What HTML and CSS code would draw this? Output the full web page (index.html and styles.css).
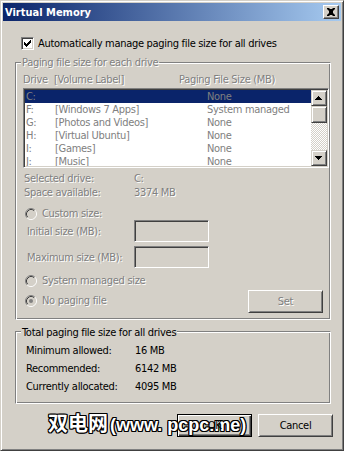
FILE: index.html
```html
<!DOCTYPE html>
<html lang="en">

<head>
    <meta charset="UTF-8">
    <title>Virtual Memory</title>
    <link rel="stylesheet" href="styles.css">
</head>

<body>
    <div class="window">
        <div class="titlebar">
            <span class="title">Virtual Memory</span>
            <span class="close-btn">
                <svg width="14" height="12" viewBox="0 0 14 12">
                    <path d="M3 2h2l1 1h2l1-1h2v1l-2 2v2l2 2v1H9L8 9H6L5 10H3V9l2-2V5L3 3z" fill="#000"/>
                    <path d="M5 5h4v2H5z" fill="#000"/>
                </svg>
            </span>
        </div>

        <div class="auto-row">
            <span class="checkbox">
                <svg width="11" height="11" viewBox="0 0 11 11">
                    <path d="M2 4h1v3H2z M3 5h1v3H3z M4 6h1v3H4z M5 5h1v3H5z M6 4h1v3H6z M7 3h1v3H7z M8 2h1v3H8z" fill="#000"/>
                </svg>
            </span>
            <span>Automatically manage paging file size for all drives</span>
        </div>

        <div class="group group-drives">
            <div class="group-title disabled">Paging file size for each drive</div>
            <div class="list-head disabled">
                <span class="head-drive">Drive</span>
                <span class="head-label">[Volume Label]</span>
                <span>Paging File Size (MB)</span>
            </div>
            <div class="listbox">
                <div class="rows">
                    <div class="row selected"><span class="col-drive">C:</span><span class="col-label"></span><span>None</span></div>
                    <div class="row"><span class="col-drive">F:</span><span class="col-label">[Windows 7 Apps]</span><span>System managed</span></div>
                    <div class="row"><span class="col-drive">G:</span><span class="col-label">[Photos and Videos]</span><span>None</span></div>
                    <div class="row"><span class="col-drive">H:</span><span class="col-label">[Virtual Ubuntu]</span><span>None</span></div>
                    <div class="row"><span class="col-drive">I:</span><span class="col-label">[Games]</span><span>None</span></div>
                    <div class="row"><span class="col-drive">J:</span><span class="col-label">[Music]</span><span>None</span></div>
                </div>
                <div class="scrollbar">
                    <div class="sb-btn">
                        <svg width="14" height="14" viewBox="0 0 14 14">
                            <path d="M6 5h1v1H6z M5 6h3v1H5z M4 7h5v1H4z M3 8h7v1H3z" fill="#000"/>
                        </svg>
                    </div>
                    <div class="sb-thumb"></div>
                    <div class="sb-track"></div>
                    <div class="sb-btn">
                        <svg width="14" height="14" viewBox="0 0 14 14">
                            <path d="M3 5h7v1H3z M4 6h5v1H4z M5 7h3v1H5z M6 8h1v1H6z" fill="#000"/>
                        </svg>
                    </div>
                </div>
            </div>

            <div class="info-row info-first disabled">
                <span class="info-label">Selected drive:</span>
                <span>C:</span>
            </div>
            <div class="info-row disabled">
                <span class="info-label">Space available:</span>
                <span>3374 MB</span>
            </div>

            <div class="radio-row radio-custom disabled">
                <svg class="radio" width="12" height="12" viewBox="0 0 12 12">
                    <circle cx="6" cy="6" r="5.5" fill="#d4d0c8"/>
                    <path d="M2.11 9.89A5.5 5.5 0 0 1 9.89 2.11" stroke="#808080" fill="none"/>
                    <path d="M9.89 2.11A5.5 5.5 0 0 1 2.11 9.89" stroke="#fff" fill="none"/>
                    <path d="M2.82 9.18A4.5 4.5 0 0 1 9.18 2.82" stroke="#404040" fill="none"/>
                    <path d="M9.18 2.82A4.5 4.5 0 0 1 2.82 9.18" stroke="#d4d0c8" fill="none"/>
                </svg>
                <span>Custom size:</span>
            </div>
            <div class="field-row">
                <span class="field-label disabled">Initial size (MB):</span>
                <input class="field" type="text" disabled>
            </div>
            <div class="field-row field-max">
                <span class="field-label disabled">Maximum size (MB):</span>
                <input class="field" type="text" disabled>
            </div>

            <div class="radio-row radio-system disabled">
                <svg class="radio" width="12" height="12" viewBox="0 0 12 12">
                    <circle cx="6" cy="6" r="5.5" fill="#d4d0c8"/>
                    <path d="M2.11 9.89A5.5 5.5 0 0 1 9.89 2.11" stroke="#808080" fill="none"/>
                    <path d="M9.89 2.11A5.5 5.5 0 0 1 2.11 9.89" stroke="#fff" fill="none"/>
                    <path d="M2.82 9.18A4.5 4.5 0 0 1 9.18 2.82" stroke="#404040" fill="none"/>
                    <path d="M9.18 2.82A4.5 4.5 0 0 1 2.82 9.18" stroke="#d4d0c8" fill="none"/>
                </svg>
                <span>System managed size</span>
            </div>
            <div class="last-row">
                <div class="radio-row disabled">
                    <svg class="radio" width="12" height="12" viewBox="0 0 12 12">
                        <circle cx="6" cy="6" r="5.5" fill="#d4d0c8"/>
                        <path d="M2.11 9.89A5.5 5.5 0 0 1 9.89 2.11" stroke="#808080" fill="none"/>
                        <path d="M9.89 2.11A5.5 5.5 0 0 1 2.11 9.89" stroke="#fff" fill="none"/>
                        <path d="M2.82 9.18A4.5 4.5 0 0 1 9.18 2.82" stroke="#404040" fill="none"/>
                        <path d="M9.18 2.82A4.5 4.5 0 0 1 2.82 9.18" stroke="#d4d0c8" fill="none"/>
                        <circle cx="6" cy="6" r="2" fill="#808080"/>
                    </svg>
                    <span>No paging file</span>
                </div>
                <button class="btn btn-set disabled">Set</button>
            </div>
        </div>

        <div class="group group-total">
            <div class="group-title">Total paging file size for all drives</div>
            <div class="total-row">
                <span class="total-label">Minimum allowed:</span>
                <span>16 MB</span>
            </div>
            <div class="total-row">
                <span class="total-label">Recommended:</span>
                <span>6142 MB</span>
            </div>
            <div class="total-row">
                <span class="total-label">Currently allocated:</span>
                <span>4095 MB</span>
            </div>
        </div>

        <div class="buttons">
            <button class="btn btn-default"><span class="btn-text">OK</span></button>
            <button class="btn">Cancel</button>
        </div>

        <div class="watermark"><span class="wm-cjk">双电网</span><span class="wm-latin">(www. pcpc.me)</span></div>
    </div>
</body>

</html>
```

FILE: styles.css
```css
body {
    margin: 0;
    font-family: "DejaVu Sans Condensed", "DejaVu Sans", sans-serif;
    font-stretch: condensed;
    font-size: 11px;
    line-height: 13px;
    letter-spacing: -0.3px;
    color: #000;
}

.window {
    position: relative;
    width: 344px;
    height: 451px;
    box-sizing: border-box;
    padding: 2px;
    background: #d4d0c8;
    border: 1px solid;
    border-color: #d4d0c8 #404040 #404040 #d4d0c8;
    box-shadow: inset 1px 1px #fff, inset -1px -1px #808080;
}

.titlebar {
    height: 18px;
    display: flex;
    align-items: center;
    justify-content: space-between;
    padding: 0 2px;
    background: linear-gradient(to right, #0a246a, #a6caf0);
}

.title {
    color: #fff;
    font-weight: bold;
    letter-spacing: 0;
}

.close-btn {
    width: 16px;
    height: 14px;
    box-sizing: border-box;
    display: flex;
    align-items: center;
    justify-content: center;
    background: #d4d0c8;
    border: 1px solid;
    border-color: #fff #404040 #404040 #fff;
    box-shadow: inset -1px -1px #808080;
}

.close-btn svg {
    display: block;
}

.disabled {
    color: #808080;
    text-shadow: 1px 1px 0 #fff;
}

/* checkbox row */
.auto-row {
    display: flex;
    align-items: center;
    gap: 4px;
    height: 13px;
    margin: 16px 0 0 18px;
}

.checkbox {
    width: 13px;
    height: 13px;
    box-sizing: border-box;
    background: #fff;
    border: 1px solid;
    border-color: #808080 #fff #fff #808080;
    box-shadow: inset 1px 1px #404040, inset -1px -1px #d4d0c8;
}

.checkbox svg {
    display: block;
}

/* group boxes */
.group {
    width: 316px;
    box-sizing: border-box;
    margin-left: 12px;
    border: 1px solid;
    border-color: #808080 #fff #fff #808080;
    box-shadow: inset 1px 1px #fff, inset -1px -1px #808080;
}

.group-title {
    width: fit-content;
    padding: 0 1px;
    background: #d4d0c8;
}

.group-drives {
    height: 258px;
    margin-top: 12px;
    padding-left: 7px;
}

.group-drives .group-title {
    margin: -7px 0 0 -2px;
}

.list-head {
    display: flex;
    height: 13px;
    margin-top: 4px;
}

.head-drive {
    width: 31px;
}

.head-label {
    width: 125px;
}

/* list box */
.listbox {
    display: flex;
    width: 306px;
    height: 80px;
    box-sizing: border-box;
    margin-top: 2px;
    padding: 1px;
    background: #fff;
    border: 1px solid;
    border-color: #808080 #fff #fff #808080;
    box-shadow: inset 1px 1px #404040, inset -1px -1px #d4d0c8;
}

.rows {
    flex: 1;
    overflow: hidden;
}

.row {
    display: flex;
    height: 13px;
    padding-left: 1px;
    color: #808080;
    white-space: nowrap;
}

.row.selected {
    background: #0a246a;
}

.col-drive {
    width: 29px;
}

.col-label {
    width: 152px;
}

.scrollbar {
    width: 16px;
    display: flex;
    flex-direction: column;
}

.sb-btn,
.sb-thumb {
    box-sizing: border-box;
    background: #d4d0c8;
    border: 1px solid;
    border-color: #d4d0c8 #404040 #404040 #d4d0c8;
    box-shadow: inset 1px 1px #fff, inset -1px -1px #808080;
}

.sb-btn {
    height: 16px;
}

.sb-btn svg {
    display: block;
}

.sb-thumb {
    height: 17px;
}

.sb-track {
    flex: 1;
    background-image: conic-gradient(#d4d0c8 25%, #fff 0 50%, #d4d0c8 0 75%, #fff 0);
    background-size: 2px 2px;
}

/* drive info */
.info-row {
    display: flex;
    height: 14px;
    line-height: 14px;
}

.info-first {
    margin-top: 4px;
}

.info-label {
    width: 110px;
    margin-left: 1px;
}

.radio-row {
    display: flex;
    align-items: center;
    gap: 5px;
    height: 12px;
    line-height: 12px;
    margin-left: 2px;
}

.radio {
    display: block;
}

.radio-custom {
    margin-top: 8px;
}

.radio-system {
    margin-top: 7px;
}

.field-row {
    display: flex;
    align-items: center;
    height: 22px;
}

.field-max {
    margin-top: 4px;
}

.field-label {
    width: 107px;
    padding-left: 4px;
}

.field {
    width: 75px;
    height: 22px;
    box-sizing: border-box;
    margin: 0;
    padding: 0;
    background: #d4d0c8;
    border: 1px solid;
    border-color: #808080 #fff #fff #808080;
    box-shadow: inset 1px 1px #404040, inset -1px -1px #d4d0c8;
}

.last-row {
    display: flex;
    align-items: center;
    height: 23px;
    margin-top: 3px;
}

.last-row .radio-row {
    margin-top: -1px;
}

/* buttons */
.btn {
    width: 75px;
    height: 23px;
    box-sizing: border-box;
    margin: 0;
    padding: 0;
    font: inherit;
    letter-spacing: inherit;
    color: #000;
    background: #d4d0c8;
    border: 1px solid;
    border-color: #fff #404040 #404040 #fff;
    box-shadow: inset 1px 1px #d4d0c8, inset -1px -1px #808080;
}

.btn.disabled {
    color: #808080;
}

.btn-set {
    margin: 0 7px 0 auto;
}

.btn-default {
    border-color: #000;
    box-shadow: inset 1px 1px #fff, inset -1px -1px #404040, inset -2px -2px #808080;
}

/* the button label sits above the watermark, the button face below it */
.btn-text {
    position: relative;
    z-index: 2;
}

/* totals */
.group-total {
    height: 73px;
    margin-top: 11px;
    padding-left: 10px;
}

.group-total .group-title {
    margin: -6px 0 0 -5px;
}

.total-row {
    display: flex;
    height: 18px;
    line-height: 18px;
}

.group-total .group-title + .total-row {
    margin-top: 3px;
}

.total-label {
    width: 109px;
}

.buttons {
    display: flex;
    justify-content: flex-end;
    gap: 6px;
    margin-top: 10px;
    padding-right: 8px;
}

/* site watermark stamped over the shot */
.watermark {
    position: absolute;
    left: 47px;
    top: 409px;
    line-height: 26px;
    font-weight: bold;
    letter-spacing: 0;
    color: #fff;
    white-space: nowrap;
    text-shadow: -1px -1px 0 #000, 1px -1px 0 #000, -1px 1px 0 #000, 1px 1px 0 #000,
        0 1px 0 #000, 0 -1px 0 #000, 1px 0 0 #000, -1px 0 0 #000;
}

.wm-cjk {
    font-family: "Noto Sans CJK SC", sans-serif;
    font-size: 20px;
}

.wm-latin {
    font-family: "Liberation Sans", sans-serif;
    font-stretch: normal;
    font-size: 18px;
    margin-left: 2px;
}
```
